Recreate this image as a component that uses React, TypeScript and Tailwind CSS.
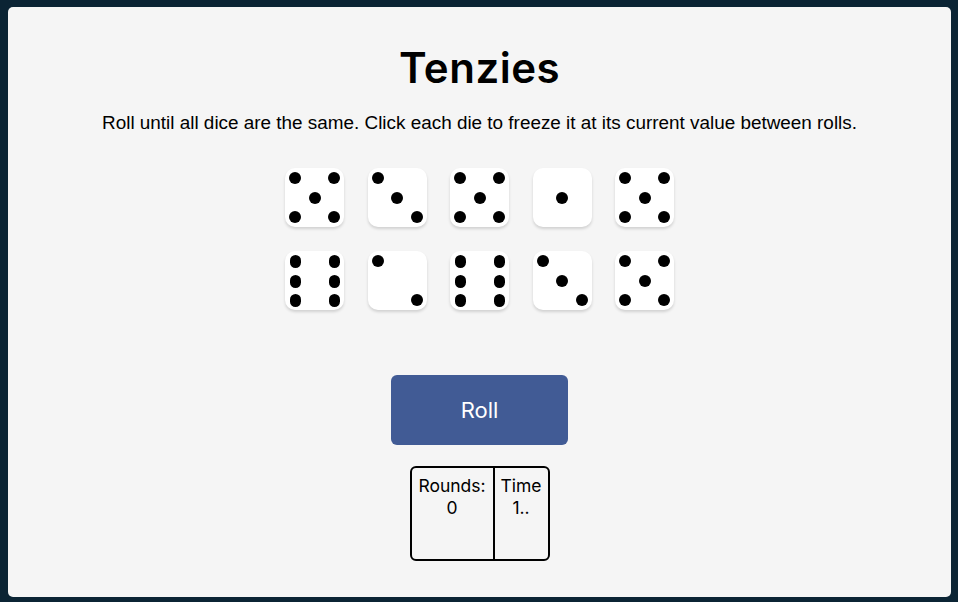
import React from "react";

const rows: number[][] = [
  [5, 3, 5, 1, 5],
  [6, 2, 6, 3, 5],
];

// pip positions on a 3x3 grid: [col, row]
const layouts: Record<number, [number, number][]> = {
  1: [[2, 2]],
  2: [[1, 1], [3, 3]],
  3: [[1, 1], [2, 2], [3, 3]],
  4: [[1, 1], [3, 1], [1, 3], [3, 3]],
  5: [[1, 1], [3, 1], [2, 2], [1, 3], [3, 3]],
  6: [[1, 1], [3, 1], [1, 2], [3, 2], [1, 3], [3, 3]],
};

const colClass = ["", "col-start-1", "col-start-2", "col-start-3"];
const rowClass = ["", "row-start-1", "row-start-2", "row-start-3"];

function Die({ value }: { value: number }) {
  return (
    <button className="grid h-[59px] w-[59px] grid-cols-[repeat(3,12px)] grid-rows-[repeat(3,12px)] content-between justify-between rounded-[10px] bg-white p-1 shadow-[0_2px_3px_rgba(0,0,0,0.15)]">
      {layouts[value].map(([c, r], i) => (
        <span
          key={i}
          className={`${colClass[c]} ${rowClass[r]} ${
            value === 6 ? "mx-auto h-[13px] w-[11px]" : "h-3 w-3"
          } rounded-full bg-black`}
        />
      ))}
    </button>
  );
}

export default function App() {
  return (
    <div className="flex h-[602px] w-full bg-[#0B2434] pb-[5px] pl-2 pr-[7px] pt-[7px]">
      <main className="flex flex-1 flex-col items-center rounded-[5px] bg-[#F5F5F5] font-['Inter',sans-serif] text-black">
        <h1 className="mt-[31px] text-[42px] font-semibold leading-[60px] tracking-[0.5px]">Tenzies</h1>
        <p className="mt-[11px] font-['Liberation_Sans',Arial,sans-serif] text-[18.9px] leading-[28px]">
          Roll until all dice are the same. Click each die to freeze it at its current value between rolls.
        </p>
        <div className="mt-[31px] grid grid-cols-[repeat(5,59px)] gap-x-[23.5px] gap-y-[24px]">
          {rows.flat().map((v, i) => (
            <Die key={i} value={v} />
          ))}
        </div>
        <button className="mt-[65px] h-[70px] w-[177px] rounded-[6px] bg-[#415B95] text-[22px] text-white">
          Roll
        </button>
        <div className="mt-[21px] flex h-[95px] w-[140px] rounded-[6px] border-2 border-black text-[17.5px] leading-[22px]">
          <div className="flex w-[83px] flex-col items-center border-r-2 border-black pt-[7px]">
            <span>Rounds:</span>
            <span>0</span>
          </div>
          <div className="flex flex-1 flex-col items-center pt-[7px]">
            <span>Time</span>
            <span>1..</span>
          </div>
        </div>
      </main>
    </div>
  );
}
